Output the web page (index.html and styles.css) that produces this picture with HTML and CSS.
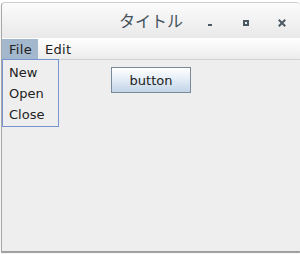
FILE: index.html
```html
<!DOCTYPE html>
<html lang="ja">
<head>
    <meta charset="UTF-8">
    <title>タイトル</title>
    <link rel="stylesheet" href="styles.css">
</head>
<body>
    <div class="window">
        <div class="title-bar">
            <div class="title-spacer"></div>
            <div class="title-text">タイトル</div>
            <div class="window-controls">
                <span class="control">
                    <svg width="8" height="8" viewBox="0 0 8 8"><rect x="2" y="5" width="4" height="2" fill="#4b5963"/></svg>
                </span>
                <span class="control">
                    <svg width="8" height="8" viewBox="0 0 8 8"><path d="M1 1H7V7H1Z M3 3V5H5V3Z" fill="#4b5963" fill-rule="evenodd"/></svg>
                </span>
                <span class="control">
                    <svg width="8" height="8" viewBox="0 0 8 8"><path d="M1.5 1.5L6.5 6.5M6.5 1.5L1.5 6.5" stroke="#4b5963" stroke-width="2" stroke-linecap="square"/></svg>
                </span>
            </div>
        </div>

        <div class="menu-bar">
            <div class="menu-item active">File
                <div class="menu-popup">
                    <div class="popup-item">New</div>
                    <div class="popup-item">Open</div>
                    <div class="popup-item">Close</div>
                </div>
            </div>
            <div class="menu-item">Edit</div>
        </div>

        <div class="content">
            <button class="swing-button">button</button>
        </div>
    </div>
</body>
</html>
```

FILE: styles.css
```css
* {
    margin: 0;
    padding: 0;
    box-sizing: border-box;
}

body {
    width: 300px;
    height: 254px;
    background: #ffffff;
    font-family: "DejaVu Sans", sans-serif;
    font-size: 13px;
    color: #222;
    overflow: hidden;
}

.window {
    margin: 2px 0 0 1px;
    width: 299px;
    height: 249px;
    background: #eeeeee;
    border-left: 1px solid #a6a6a6;
    border-top: 1px solid #cfcfcf;
    border-radius: 4px 4px 0 0;
    box-shadow: 0 2px 1px #9c9c9c;
    display: flex;
    flex-direction: column;
}

.title-bar {
    height: 35px;
    display: grid;
    grid-template-columns: 1fr auto 1fr;
    align-items: center;
    background: linear-gradient(#fbfbfb, #e9e9e9);
    border-radius: 4px 4px 0 0;
}

.title-text {
    font-family: "Noto Sans CJK JP", "DejaVu Sans", sans-serif;
    font-size: 16px;
    color: #45525c;
    padding-bottom: 2px;
}

.window-controls {
    display: flex;
    justify-content: flex-end;
    align-self: stretch;
}

.control {
    width: 36px;
    display: flex;
    justify-content: center;
    padding-top: 16px;
}

.control svg {
    display: block;
}

.menu-bar {
    height: 22px;
    display: flex;
    align-items: stretch;
    background: linear-gradient(#ffffff, #ececec);
    border-bottom: 1px solid #d2d2d2;
}

.menu-item {
    position: relative;
    padding: 4px 6px 0 7px;
    color: #222;
    letter-spacing: 0.3px;
}

.menu-item.active {
    background: #a3b8cc;
    margin-top: 1px;
    padding-top: 3px;
}

.menu-popup {
    position: absolute;
    top: 20px;
    left: 0;
    width: 57px;
    height: 68px;
    background: #eeeeee;
    border: 1px solid #7594d0;
    padding-top: 3px;
    letter-spacing: 0;
}

.popup-item {
    height: 21px;
    padding: 2px 0 0 6px;
}

.content {
    flex: 1;
    display: flex;
    justify-content: center;
    align-items: flex-start;
    padding-top: 7px;
}

.swing-button {
    width: 80px;
    height: 26px;
    font-family: "DejaVu Sans", sans-serif;
    font-size: 13px;
    color: #222;
    background: linear-gradient(#ffffff 0%, #e8f0f8 40%, #c2d4e6 100%);
    border: 1px solid #7a8a99;
    border-radius: 0;
}
```
